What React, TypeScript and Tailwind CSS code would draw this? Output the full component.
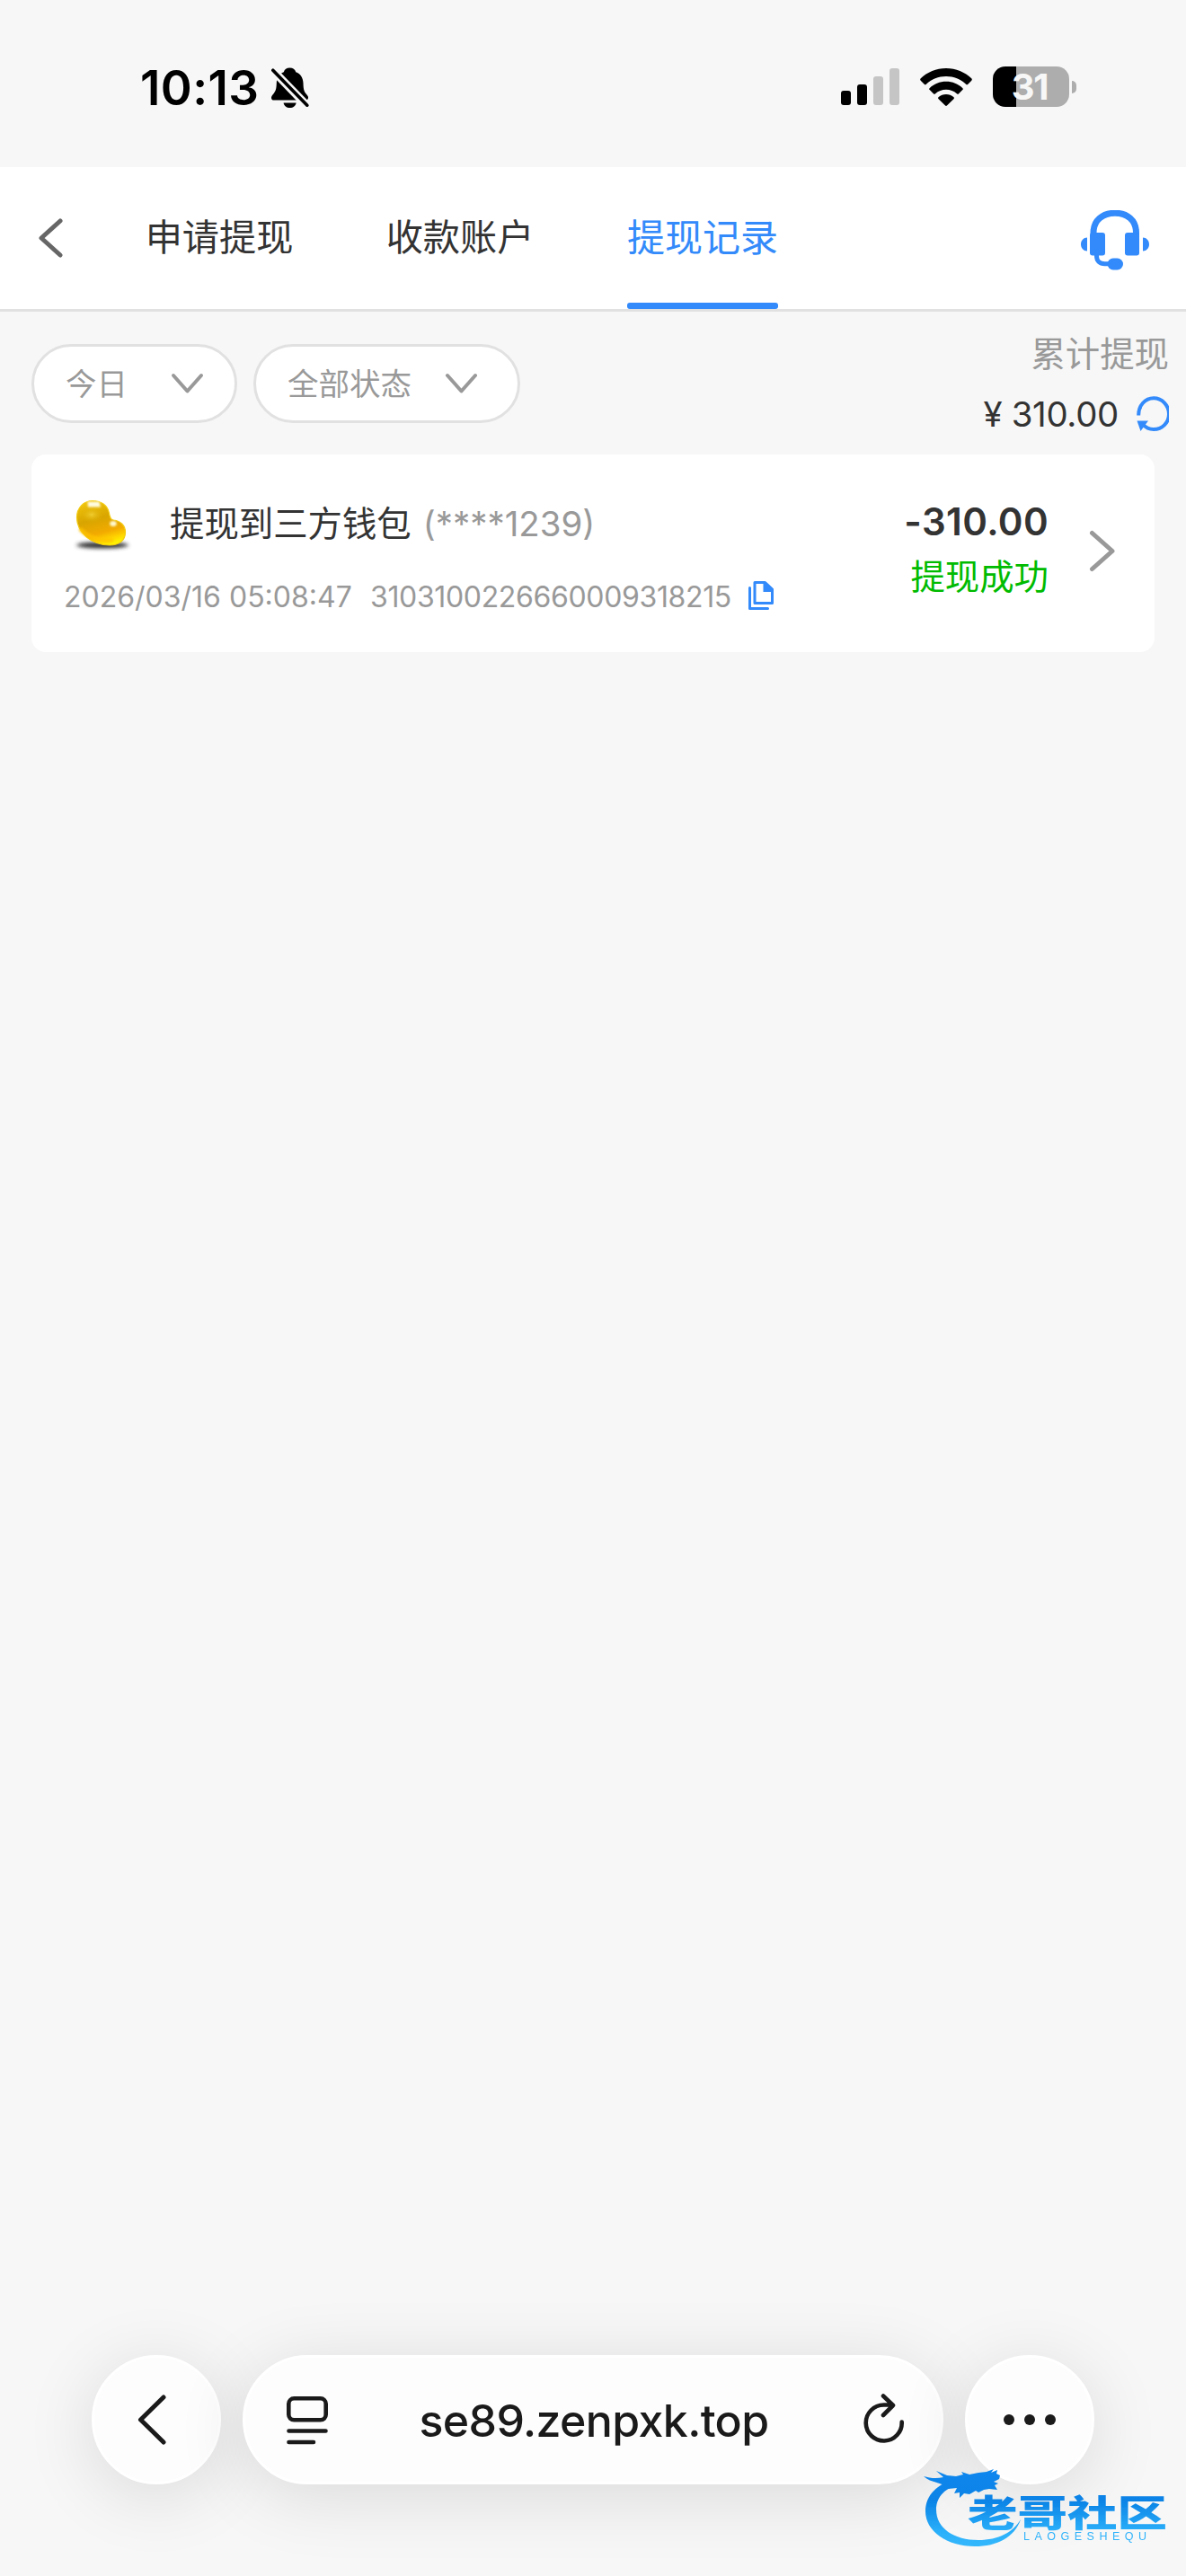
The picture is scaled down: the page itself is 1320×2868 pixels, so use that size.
import { FC } from 'react';
import clsx from 'clsx';

type TabProps = {
	title: string,
	active?: boolean
}

type FilterProps = {
	label: string,
	className?: string
}

type RecordProps = {
	title: string,
	account: string,
	time: string,
	orderNo: string,
	amount: string,
	status: string
}

const tabs: TabProps[] = [
	{ title: '申请提现' },
	{ title: '收款账户' },
	{ title: '提现记录', active: true },
];

const records: RecordProps[] = [
	{
		title: '提现到三方钱包',
		account: '(****1239)',
		time: '2026/03/16 05:08:47',
		orderNo: '3103100226660009318215',
		amount: '-310.00',
		status: '提现成功',
	},
];

const MutedBell = () => (
	<svg className="w-[42px] h-[47px]" viewBox="0 0 42 47">
		<path d="M20.500 .500c3.500 0 6 2 6.800 4.800 5 1.600 8 6.200 8.200 12.200.2 7.500 1 9.500 3.800 12.700 1.600 1.800 2 2.800 1.600 4.300-.3 1.200-1.200 2-2.800 2H3c-1.800 0-3-1-3-2.600 0-1.200.5-2.200 1.700-3.600C5 26.500 5.600 24 5.800 17.500 6 11.500 9 6.900 13.800 5.300 14.500 2.500 17 .500 20.500.500z" fill="#000" />
		<path d="M13.600 39.500h14c-.5 3.200-3.300 5.600-7 5.600s-6.500-2.400-7-5.600z" fill="#000" />
		<path d="M-1 .5l42 43.500" stroke="#f7f7f7" strokeWidth="9" />
		<path d="M1.800 3.200l38 39" stroke="#000" strokeWidth="3.600" strokeLinecap="round" />
	</svg>
);

const Signal = () => (
	<div className="flex items-end gap-[7px] h-[41px]">
		<div className="w-[11px] h-4 rounded-[3px] bg-black" />
		<div className="w-[11px] h-[23px] rounded-[3px] bg-black" />
		<div className="w-[11px] h-8 rounded-[3px] bg-[#c5c5c5]" />
		<div className="w-[11px] h-[41px] rounded-[3px] bg-[#c5c5c5]" />
	</div>
);

const Wifi = () => (
	<svg className="w-[58px] h-[42px]" viewBox="0 0 58 42">
		<path d="M29 0c11 0 21 4.300 28.200 11.300.8.800.8 1.600.1 2.400l-4 4c-.7.700-1.500.700-2.200 0C45.300 12.300 37.500 9 29 9S12.700 12.300 6.900 17.700c-.7.700-1.500.700-2.200 0l-4-4c-.7-.8-.7-1.600.1-2.400C8 4.300 18 0 29 0z" />
		<path d="M29 14.800c7.100 0 13.500 2.700 18.200 7.100.8.800.8 1.500.1 2.200l-4.200 4.100c-.7.700-1.400.7-2.200 0C37.700 25.500 33.600 23.800 29 23.800s-8.700 1.700-11.900 4.400c-.8.700-1.500.7-2.200 0l-4.200-4.100c-.7-.7-.7-1.400.1-2.200 4.700-4.400 11.100-7.100 18.200-7.100z" />
		<path d="M29 29c3.200 0 6.100 1.200 8.300 3 .8.700.8 1.500.1 2.200l-7.200 7.100c-.8.800-1.600.8-2.400 0l-7.200-7.100c-.7-.7-.7-1.500.1-2.200 2.200-1.800 5.100-3 8.300-3z" />
	</svg>
);

const Battery = () => (
	<div className="flex items-center gap-[3px]">
		<div className="w-[85px] h-[45px] rounded-[14px] bg-[linear-gradient(to_right,#000_26px,#adadad_26px)] flex items-center justify-center pr-[3px]">
			<span className="text-[40px] leading-none font-bold text-[#f7f7f7] tracking-[-1.2px]">31</span>
		</div>
		<div className="w-[5px] h-[14px] rounded-r-full bg-[#adadad]" />
	</div>
);

const StatusBar = () => (
	<div className="h-[186px] flex items-start justify-between pl-[156px] pr-[122px]">
		<div className="flex items-start pt-[74px]">
			<span className="w-[146px] h-[48px] text-[53px] leading-[48px] font-semibold text-black tracking-[0.4px] whitespace-nowrap">10:13</span>
			<div className="pt-[1px]"><MutedBell /></div>
		</div>
		<div className="flex items-center gap-[23px] pt-[74px]">
			<Signal />
			<Wifi />
			<Battery />
		</div>
	</div>
);

const Headset = () => (
	<svg className="w-[76px] h-[67px]" viewBox="0 0 76 67" fill="#338afa">
		<path d="M14 29v-4C14 11 24.500 3.200 38 3.200S61.500 11 61.500 25v4" fill="none" stroke="#338afa" strokeWidth="7" />
		<rect x="10" y="25" width="17" height="25.500" rx="3" />
		<rect x="49" y="25" width="16" height="25.500" rx="3" />
		<path d="M7 30.500v15C3 45.500 0 42.300 0 38s3-7.500 7-7.500zM69 30.500v15c4 0 7-3.200 7-7.500s-3-7.500-7-7.500z" />
		<path d="M17.500 49v2c0 5.500 3.500 8.700 9 8.700h7" fill="none" stroke="#338afa" strokeWidth="5" />
		<rect x="29.500" y="53.500" width="17.500" height="13" rx="6.500" />
	</svg>
);

const Tab: FC<TabProps> = ({ title, active }) => (
	<div className={clsx('relative h-full flex items-center justify-center', active ? 'w-[168px]' : 'w-[164px]')}>
		<span className={clsx('leading-none whitespace-nowrap', active ? 'text-[42px] text-[#338afa]' : 'text-[41.200px] text-[#333333]')}>{title}</span>
		{active && <div className="absolute bottom-0 left-0 w-full h-[7px] rounded-[3px] bg-[#338afa]" />}
	</div>
);

const NavBar = () => (
	<div className="h-[161px] bg-white border-b-3 border-[#e1e1e1] flex items-center pl-[43px] pr-[41px]">
		<svg className="w-[27px] h-[44px]" viewBox="0 0 27 44" fill="none" stroke="#666666" strokeWidth="5" strokeLinecap="round" strokeLinejoin="round">
			<path d="M24 3L3 22l21 19" />
		</svg>
		<div className="flex h-full gap-[104px] ml-[92px]">
			{tabs.map((tab) => <Tab key={tab.title} {...tab} />)}
		</div>
		<div className="ml-auto pt-1"><Headset /></div>
	</div>
);

const Filter: FC<FilterProps> = ({ label, className }) => (
	<div className={clsx('h-[88px] rounded-full border-3 border-[#e1e1e1] bg-white flex items-center justify-between pl-[35px]', className)}>
		<span className="text-[34.500px] leading-none text-[#999999] pt-[2px] whitespace-nowrap">{label}</span>
		<svg className="w-[37px] h-[24px]" viewBox="0 0 37 24" fill="none" stroke="#999999" strokeWidth="4" strokeLinecap="round" strokeLinejoin="round">
			<path d="M3 3l15.500 17.500L34 3" />
		</svg>
	</div>
);

const Refresh = () => (
	<svg className="w-[36px] h-[40px]" viewBox="0 0 36 40">
		<path d="M2.200 21.500C2 10.500 9.500 2.300 19 2.300S36 10.500 36 20 28.500 37 19 37c-5 0-9-2-12-5.500" fill="none" stroke="#338afa" strokeWidth="4" />
		<path d="M.500 27.500h12.500L4.500 39z" fill="#338afa" />
	</svg>
);

const FilterBar = () => (
	<div className="flex items-start pl-[35px] pr-[19px] h-[159px]">
		<Filter label="今日" className="w-[229px] mt-9 pr-[34px]" />
		<Filter label="全部状态" className="w-[297px] ml-[18px] mt-9 pr-[44px]" />
		<div className="ml-auto flex flex-col items-end pt-[25px]">
			<span className="text-[38.400px] leading-[44px] text-[#999999] whitespace-nowrap">累计提现</span>
			<div className="flex items-center gap-5 mt-[25px]">
				<span className="text-[38.400px] leading-[40px] text-[#333333] tracking-[-0.3px] whitespace-nowrap">¥ 310.00</span>
				<Refresh />
			</div>
		</div>
	</div>
);

const GoldBean = () => (
	<svg className="w-[70px] h-[60px]" viewBox="20 25 70 60">
		<defs>
			<linearGradient id="bean" x1="0.3" y1="0" x2="0.6" y2="1">
				<stop offset="0" stopColor="#f0c40c" />
				<stop offset="0.4" stopColor="#d8a500" />
				<stop offset="0.72" stopColor="#f3ab00" />
				<stop offset="0.88" stopColor="#ffd400" />
				<stop offset="1" stopColor="#fff200" />
			</linearGradient>
			<radialGradient id="beanGlow">
				<stop offset="0" stopColor="#efcd30" />
				<stop offset="1" stopColor="#e0ad00" stopOpacity="0" />
			</radialGradient>
			<filter id="soft" x="-30%" y="-80%" width="160%" height="260%">
				<feGaussianBlur stdDeviation="2" />
			</filter>
			<filter id="gloss" x="-30%" y="-30%" width="160%" height="160%">
				<feGaussianBlur stdDeviation="0.8" />
			</filter>
		</defs>
		<ellipse cx="54" cy="77" rx="29" ry="3.500" fill="#333" filter="url(#soft)" />
		<path d="M43 27.500C53 27.500 60 33 61.500 41.500c.7 4.500 1.500 7 5 7.500 7.500.8 13 6 13 13.500C79.500 71.500 73 77 62 77 42 77 25.500 63 25.500 46 25.500 35.500 33 27.500 43 27.500z" fill="url(#bean)" stroke="#f3cb10" strokeWidth="1.200" />
		<ellipse cx="42" cy="43" rx="13" ry="9" fill="url(#beanGlow)" />
		<path d="M37.500 28.500h13l1.500 6H38z" fill="#fffbe0" filter="url(#gloss)" />
		<ellipse cx="66" cy="53" rx="3.800" ry="3" fill="#fff9d0" filter="url(#gloss)" />
		<path d="M30 60c8 8 20 12.500 34 11.500" stroke="#ffc400" strokeWidth="5" fill="none" strokeLinecap="round" opacity="0.7" filter="url(#gloss)" />
	</svg>
);

const CopyIcon = () => (
	<svg className="w-[29px] h-[33px]" viewBox="0 0 29 33" fill="none" stroke="#338afa" strokeWidth="3">
		<path d="M7 1.500h11.500L26.500 9v15.500H7z" strokeLinejoin="round" />
		<path d="M16.500 1h3L28 9.500V12H16.500z" fill="#338afa" stroke="none" />
		<path d="M1.500 7.500v23H21.500" strokeLinecap="round" strokeLinejoin="round" />
	</svg>
);

const RecordCard: FC<RecordProps> = (props) => {
	const { title, account, time, orderNo, amount, status } = props;

	return (
		<div className="mx-[35px] h-[220px] rounded-2xl bg-white flex items-center pl-9 pr-[43px]">
			<div className="flex flex-col h-full">
				<div className="flex items-center mt-[45px] h-[68px]">
					<div className="w-[118px] pl-[9px]"><GoldBean /></div>
					<span className="text-[38.400px] leading-none text-[#333333] pb-[3px] whitespace-nowrap">{title}</span>
					<span className="text-[38.400px] leading-none text-[#999999] ml-[13px] pb-[3px] whitespace-nowrap">{account}</span>
				</div>
				<div className="flex items-center mt-[24px] h-10 text-[32px] leading-none text-[#999999] whitespace-nowrap">
					<span className="w-[341px] pt-[3px]">{time}</span>
					<span className="w-[421px] pt-[3px] tracking-[-0.35px]">{orderNo}</span>
					<CopyIcon />
				</div>
			</div>
			<div className="ml-auto flex flex-col items-end h-full pt-[53px]">
				<span className="text-[42px] leading-[44px] font-semibold text-[#333333] tracking-[0.4px] whitespace-nowrap">{amount}</span>
				<span className="text-[38.400px] leading-[44px] text-[#00bb00] mt-[17px] whitespace-nowrap">{status}</span>
			</div>
			<svg className="w-[30px] h-[47px] ml-[45px] mb-[5px]" viewBox="0 0 30 47" fill="none" stroke="#999999" strokeWidth="5" strokeLinecap="round" strokeLinejoin="round">
				<path d="M3.500 3.500l22.500 20-22.500 20" />
			</svg>
		</div>
	);
};

const BrowserBar = () => (
	<div className="flex gap-6 px-[102px] h-[144px] text-[#1a1a1a]">
		<div className="w-[144px] rounded-full bg-[#fdfdfd] border-3 border-white shadow-[0_12px_80px_rgba(0,0,0,0.12)] flex items-center justify-center pr-[10px]">
			<svg className="w-[32px] h-[56px]" viewBox="0 0 32 56" fill="none" stroke="currentColor" strokeWidth="5" strokeLinecap="round" strokeLinejoin="round">
				<path d="M29 3L3.500 28 29 53" />
			</svg>
		</div>
		<div className="w-[780px] rounded-full bg-[#fdfdfd] border-3 border-white shadow-[0_12px_80px_rgba(0,0,0,0.12)] flex items-center justify-between pl-[46px] pr-[40px]">
			<svg className="w-[46px] h-[54px] mt-[2px]" viewBox="0 0 46 54" fill="none" stroke="currentColor" strokeWidth="4.600" strokeLinecap="round">
				<rect x="2.300" y="2.300" width="41.400" height="24" rx="6" />
				<path d="M2.500 38.500h41M2.500 51h27.500" />
			</svg>
			<span className="text-[50px] leading-none font-medium tracking-[-0.6px] pt-[2px] pr-[4px] whitespace-nowrap">se89.zenpxk.top</span>
			<svg className="w-[46px] h-[56px] mb-[4px]" viewBox="0 0 46 56" fill="none" stroke="currentColor" strokeWidth="4.600" strokeLinecap="round" strokeLinejoin="round">
				<path d="M42.700 32.500A20 20 0 1 1 22.700 13.500H32M22 3.500L33 14 22 25" />
			</svg>
		</div>
		<div className="w-[144px] rounded-full bg-[#fdfdfd] border-3 border-white shadow-[0_12px_80px_rgba(0,0,0,0.12)] flex items-center justify-center gap-[11px]">
			<div className="w-3 h-3 rounded-full bg-[#1a1a1a]" />
			<div className="w-3 h-3 rounded-full bg-[#1a1a1a]" />
			<div className="w-3 h-3 rounded-full bg-[#1a1a1a]" />
		</div>
	</div>
);

const CommunityLogo = () => (
	<svg className="absolute left-[1024px] top-[2742px] w-[284px] h-[100px]" viewBox="0 0 284 100">
		<defs>
			<linearGradient id="logo" x1="0" y1="8" x2="0" y2="94" gradientUnits="userSpaceOnUse">
				<stop offset="0" stopColor="#0a86ee" />
				<stop offset="0.4" stopColor="#0b83e6" />
				<stop offset="0.8" stopColor="#2bb0fa" />
				<stop offset="1" stopColor="#35b8fc" />
			</linearGradient>
			<filter id="haze">
				<feGaussianBlur stdDeviation="0.5" />
			</filter>
		</defs>
		<g fill="url(#logo)" filter="url(#haze)">
			<path d="M40 19C20 22 6 36 6 54c0 22 24 39 55 39 25 0 44-10 51-30-8 14-25 23-47 23-27 0-47-13-47-34 0-14 10-25 28-28z" />
			<path d="M4 15c7 2 14 3 22 1l-8-7 12 5 10 1 8-2-2-3 9 3 10-2 9-1 8-3-3 4 7-3-1 4 4 2-1 4-6 3 5 2-4 2 3 5-9-1-6 1-6 3-3-2-7 4-6-1-5 5v-6l-6 1 3-6-10 1C26 21 12 23 4 15z" />
			<text x="53" y="71" fontSize="41" fontWeight="900" textLength="222" lengthAdjust="spacingAndGlyphs" fontFamily='"Liberation Sans", "Noto Sans CJK SC", sans-serif'>老哥社区</text>
			<text x="115" y="85.500" fontSize="12.500" textLength="137" fontFamily='"Liberation Sans", sans-serif'>LAOGESHEQU</text>
		</g>
	</svg>
);

const App = () => {
	return (
		<div className="relative w-[1320px] h-[2868px] overflow-hidden bg-[#f7f7f7] flex flex-col font-[Inter,'Noto_Sans_CJK_SC',sans-serif]">
			<StatusBar />
			<NavBar />
			<FilterBar />
			{records.map((record) => <RecordCard key={record.orderNo} {...record} />)}
			<div className="mt-auto pb-[102px]">
				<BrowserBar />
			</div>
			<CommunityLogo />
		</div>
	);
};

export default App;
